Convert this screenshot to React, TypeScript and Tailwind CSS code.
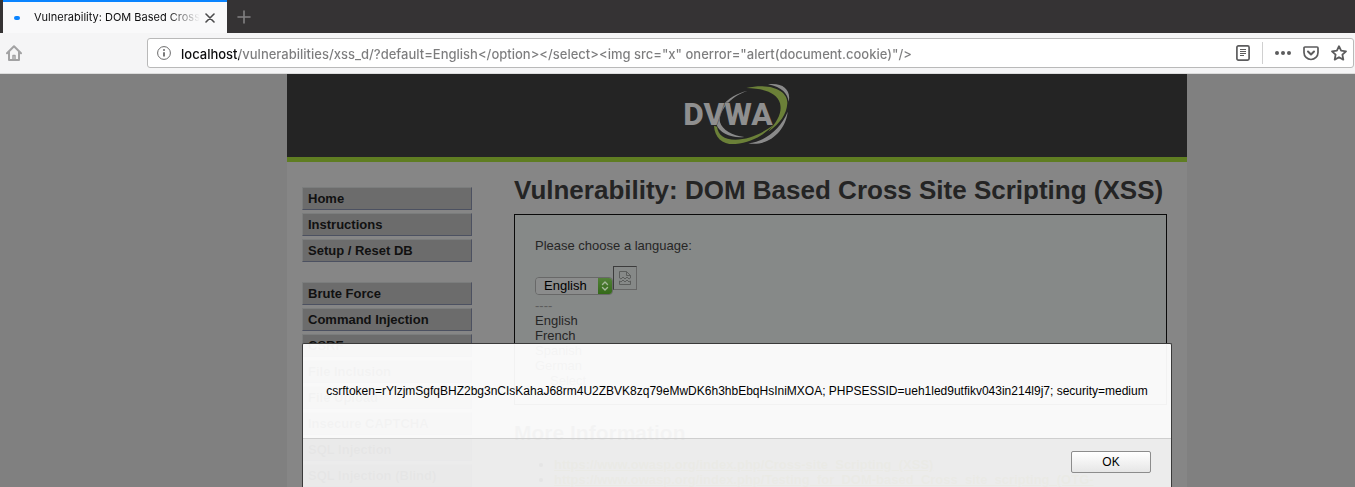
import { useState } from 'react'
import { clsx } from 'clsx'

const menuGroups = [
  ['Home', 'Instructions', 'Setup / Reset DB'],
  [
    'Brute Force',
    'Command Injection',
    'CSRF',
    'File Inclusion',
    'File Upload',
    'Insecure CAPTCHA',
    'SQL Injection',
    'SQL Injection (Blind)',
  ],
]

const links = [
  'https://www.owasp.org/index.php/Cross-site_Scripting_(XSS)',
  'https://www.owasp.org/index.php/Testing_for_DOM-based_Cross_site_scripting_(OTG-',
]

const initialUrl =
  'localhost/vulnerabilities/xss_d/?default=English</option></select><img src="x" onerror="alert(document.cookie)"/>'

const cookie =
  'csrftoken=rYlzjmSgfqBHZ2bg3nCIsKahaJ68rm4U2ZBVK8zq79eMwDK6h3hbEbqHsIniMXOA; PHPSESSID=ueh1led9utfikv043in214l9j7; security=medium'

function TabBar() {
  return (
    <div className="flex h-[33px] shrink-0 bg-[#353334] pl-[3px]">
      <div className="flex w-[224px] items-center border-t-2 border-[#0a84ff] bg-[#f9f9fa] pl-[11px]">
        <span className="h-1 w-1.5 rounded-full bg-[#0a84ff]" />
        <span className="ml-[14px] w-[166px] overflow-hidden bg-linear-to-r from-[#0c0c0d] from-80% to-transparent bg-clip-text text-[11px] whitespace-nowrap text-transparent">
          Vulnerability: DOM Based Cross
        </span>
        <button aria-label="Close tab" className="ml-[5px]">
          <svg className="h-[10px] w-[10px]" viewBox="0 0 10 10" stroke="#4a4a4b" strokeWidth="1.6" strokeLinecap="round">
            <path d="M1 1l8 8M9 1L1 9" />
          </svg>
        </button>
      </div>
      <button aria-label="New tab" className="ml-[10px]">
        <svg className="h-[14px] w-[14px]" viewBox="0 0 14 14" stroke="#828182" strokeWidth="1.6" strokeLinecap="round">
          <path d="M7 1v12M1 7h12" />
        </svg>
      </button>
    </div>
  )
}

function Toolbar() {
  const [url, setUrl] = useState(initialUrl)

  return (
    <div className="flex h-[41px] shrink-0 items-center border-b border-[#dcdcdc] bg-[#f5f5f6] pr-px pl-[6px]">
      <button aria-label="Home">
        <svg className="h-4 w-4" viewBox="0 0 16 16" fill="none" stroke="#a2a2a3" strokeWidth="2" strokeLinejoin="round" strokeLinecap="round">
          <path d="M1 8.2L8 1.2l7 7" />
          <path d="M3 7v8h10V7" />
          <path d="M7 15v-4.500h2V15" strokeWidth="1.500" />
        </svg>
      </button>
      <div className="ml-[125px] flex h-[30px] flex-1 items-center rounded-[3px] border border-[#b9b9b9] bg-white pr-[6px] pl-[9px]">
        <svg className="h-[14px] w-[14px] shrink-0" viewBox="0 0 14 14" fill="none" stroke="#6a6a6b">
          <circle cx="7" cy="7" r="6.400" />
          <path d="M7 6.300v4.200" strokeWidth="1.800" />
          <circle cx="7" cy="4" r="1" fill="#6a6a6b" stroke="none" />
        </svg>
        <input
          aria-label="Address"
          value={url}
          onChange={(e) => setUrl(e.target.value)}
          spellCheck={false}
          className="ml-[10px] h-6 min-w-0 flex-1 bg-[linear-gradient(to_right,#0c0c0d_58px,#7c7c7d_58px)] bg-clip-text pt-0.5 text-[13px] font-medium text-transparent outline-none"
        />
        <button aria-label="Reader view" className="ml-4">
          <svg className="h-4 w-[14px]" viewBox="0 0 14 16" fill="none" stroke="#5c5c5d">
            <rect x="0.900" y="0.900" width="12.200" height="14.200" rx="1.500" strokeWidth="1.700" />
            <path d="M4 4.500h6M4 6.500h6M4 8.500h6M4 10.500h4" />
          </svg>
        </button>
        <span className="mx-3 h-[22px] w-px bg-[#d0d0d0]" />
        <button aria-label="Page actions">
          <svg className="h-4 w-4" viewBox="0 0 16 16" fill="#5c5c5d">
            <circle cx="2" cy="8" r="2" />
            <circle cx="8" cy="8" r="2" />
            <circle cx="14" cy="8" r="2" />
          </svg>
        </button>
        <button aria-label="Save to Pocket" className="ml-3">
          <svg className="h-4 w-4" viewBox="0 0 16 16" fill="none" stroke="#5c5c5d" strokeWidth="2" strokeLinejoin="round" strokeLinecap="round">
            <path d="M2 2h12q1 0 1 1v4.500a7 7 0 0 1-14 0V3q0-1 1-1z" strokeWidth="1.700" />
            <path d="M5 6.500l3 3 3-3" />
          </svg>
        </button>
        <button aria-label="Bookmark" className="ml-3">
          <svg className="h-4 w-4" viewBox="0 0 16 16" fill="none" stroke="#5c5c5d" strokeWidth="1.800" strokeLinejoin="round">
            <path d="M8 1.200l2.100 4.500 4.900.6-3.600 3.400.9 4.900L8 12.200l-4.300 2.400.9-4.900L1 6.300l4.900-.6z" />
          </svg>
        </button>
      </div>
    </div>
  )
}

function Logo() {
  return (
    <svg className="h-16 w-[108px]" viewBox="42 21 324 192" role="img" aria-label="DVWA">
      <path d="M236 47C170 62 132 115 142 148C152 176 188 190 226 186C190 182 160 165 153 142C148 112 180 65 236 47z" fill="#8a8a8a" />
      <path d="M297 28C342 22 367 45 359 80C356 57 340 36 297 28z" fill="#8a8a8a" />
      <path d="M356 110C351 165 300 216 238 205C286 200 334 164 356 110z" fill="#8a8a8a" />
      <path d="M232 39C310 22 357 50 355 85C353 118 334 145 298 170C326 138 340 113 333 85C324 54 286 40 232 39z" fill="#6b8038" />
      <path d="M135 152C137 190 163 210 200 207C246 202 286 180 317 148C279 176 238 194 199 194C164 193 148 180 144 155z" fill="#6b8038" />
      <text x="43" y="151" fill="#8f8f8f" stroke="#242424" strokeWidth="2" paintOrder="stroke" className="font-[Roboto,sans-serif] text-[95px] font-extrabold">
        DVWA
      </text>
    </svg>
  )
}

function Menu() {
  return (
    <nav className="flex w-[170px] flex-col gap-[20px] pt-[25px]">
      {menuGroups.map((group) => (
        <ul key={group[0]} className="flex flex-col gap-[3px]">
          {group.map((item) => (
            <li key={item}>
              <a
                href="#"
                className="block h-[23px] border border-t-[#7b7d7d] border-r-[#4c5161] border-b-[#4c5161] border-l-[#7b7d7d] bg-[#6c6c6c] pl-[5px] text-[13px] leading-[22px] font-bold text-[#111]"
              >
                {item}
              </a>
            </li>
          ))}
        </ul>
      ))}
    </nav>
  )
}

function Main() {
  const [language, setLanguage] = useState('English')

  return (
    <main className="min-w-0 flex-1 pt-[12px]">
      <h1 className="text-[26px] leading-8 font-bold whitespace-nowrap text-[#242424]">
        Vulnerability: DOM Based Cross Site Scripting (XSS)
      </h1>
      <form
        onSubmit={(e) => e.preventDefault()}
        className="mt-[8px] h-[191px] border border-[#0a0a0a] bg-[#868988] px-5 pt-[23px] text-[13px] leading-[15px] text-[#262626]"
      >
        <label htmlFor="language">Please choose a language:</label>
        <div className="mt-[13px] flex items-start">
          <div className="relative mt-[11px] h-[18px] w-[78px] overflow-hidden rounded-[4px] border border-[#686868]">
            <select
              id="language"
              value={language}
              onChange={(e) => setLanguage(e.target.value)}
              className="block h-4 w-full appearance-none bg-[#8b8c8c] pl-2 text-[13px] leading-4 text-black outline-none"
            >
              <option>English</option>
              <option>French</option>
              <option>Spanish</option>
              <option>German</option>
            </select>
            <span className="pointer-events-none absolute inset-y-0 right-0 flex w-[14px] items-center justify-center bg-linear-to-b from-[#528038] to-[#346a18]">
              <svg className="h-[10px] w-2" viewBox="0 0 8 10" fill="none" stroke="#a6b89c" strokeWidth="1.400" strokeLinecap="round" strokeLinejoin="round">
                <path d="M1.500 3.500L4 1l2.500 2.500M1.500 6.500L4 9l2.500-2.500" />
              </svg>
            </span>
          </div>
          <span className="flex h-6 w-6 items-center justify-center border border-t-[#3c3c3c] border-r-[#666] border-b-[#666] border-l-[#3c3c3c]">
            <svg className="h-[14px] w-3" viewBox="0 0 12 14" fill="none" stroke="#5c5e5d">
              <path d="M.5 7V.5h7l4 4V7M7.500.500v4h4M.5 7l1.500 1L4 6l2 2 2-2 2 2 1.500-1M.5 13.500V10L2 11l2-2 2 2 2-2 2 2 1.500-1v3.500z" />
            </svg>
          </span>
        </div>
        <p className="mt-[3px] text-[#5c5c5c]">----</p>
        <p>English</p>
        <p>French</p>
        <p>Spanish</p>
        <p>German</p>
        <button className="ml-[15px]">Select</button>
      </form>
      <h2 className="mt-4 text-[21px] leading-6 font-bold text-[#242424]">More Information</h2>
      <ul className="mt-[12px] list-disc pl-10 text-[13px] leading-[15px]">
        {links.map((link) => (
          <li key={link}>
            <a href="#" className="font-bold whitespace-nowrap text-[#5f6010] underline">
              {link}
            </a>
          </li>
        ))}
      </ul>
    </main>
  )
}

function AlertDialog({ onClose }: { onClose: () => void }) {
  return (
    <div
      role="alertdialog"
      aria-label="Cookie"
      className="absolute top-[269px] right-0 bottom-0 left-[119px] mx-auto flex w-[870px] flex-col rounded-t-[2px] border-x border-t border-[#3a3a3a] bg-white/95"
    >
      <p className="flex h-[94px] items-center justify-center text-[12px] whitespace-nowrap text-black">{cookie}</p>
      <div className="flex flex-1 items-start justify-end border-t border-[#cfcfcf] bg-black/5 pt-3 pr-5">
        <button
          onClick={onClose}
          className="h-[22px] w-20 rounded-[2px] border border-[#8c8c8c] bg-linear-to-b from-white to-[#e6e6e6] text-[12px] leading-[18px] text-black"
        >
          OK
        </button>
      </div>
    </div>
  )
}

export default function App() {
  const [open, setOpen] = useState(true)

  return (
    <div className="flex h-screen flex-col overflow-hidden font-[Inter,sans-serif]">
      <TabBar />
      <Toolbar />
      <div className={clsx('relative flex-1 overflow-hidden bg-[#808080] pl-[119px]', "font-['Liberation_Sans',Arial,sans-serif]")}>
        <div className="mx-auto w-full max-w-[900px] bg-[#868686]">
          <header className="flex h-[88px] justify-center border-b-[5px] border-[#5f7d22] bg-[#242424] pt-2">
            <Logo />
          </header>
          <div className="flex gap-[42px] pr-5 pl-[15px]">
            <Menu />
            <Main />
          </div>
        </div>
        {open && <AlertDialog onClose={() => setOpen(false)} />}
      </div>
    </div>
  )
}
